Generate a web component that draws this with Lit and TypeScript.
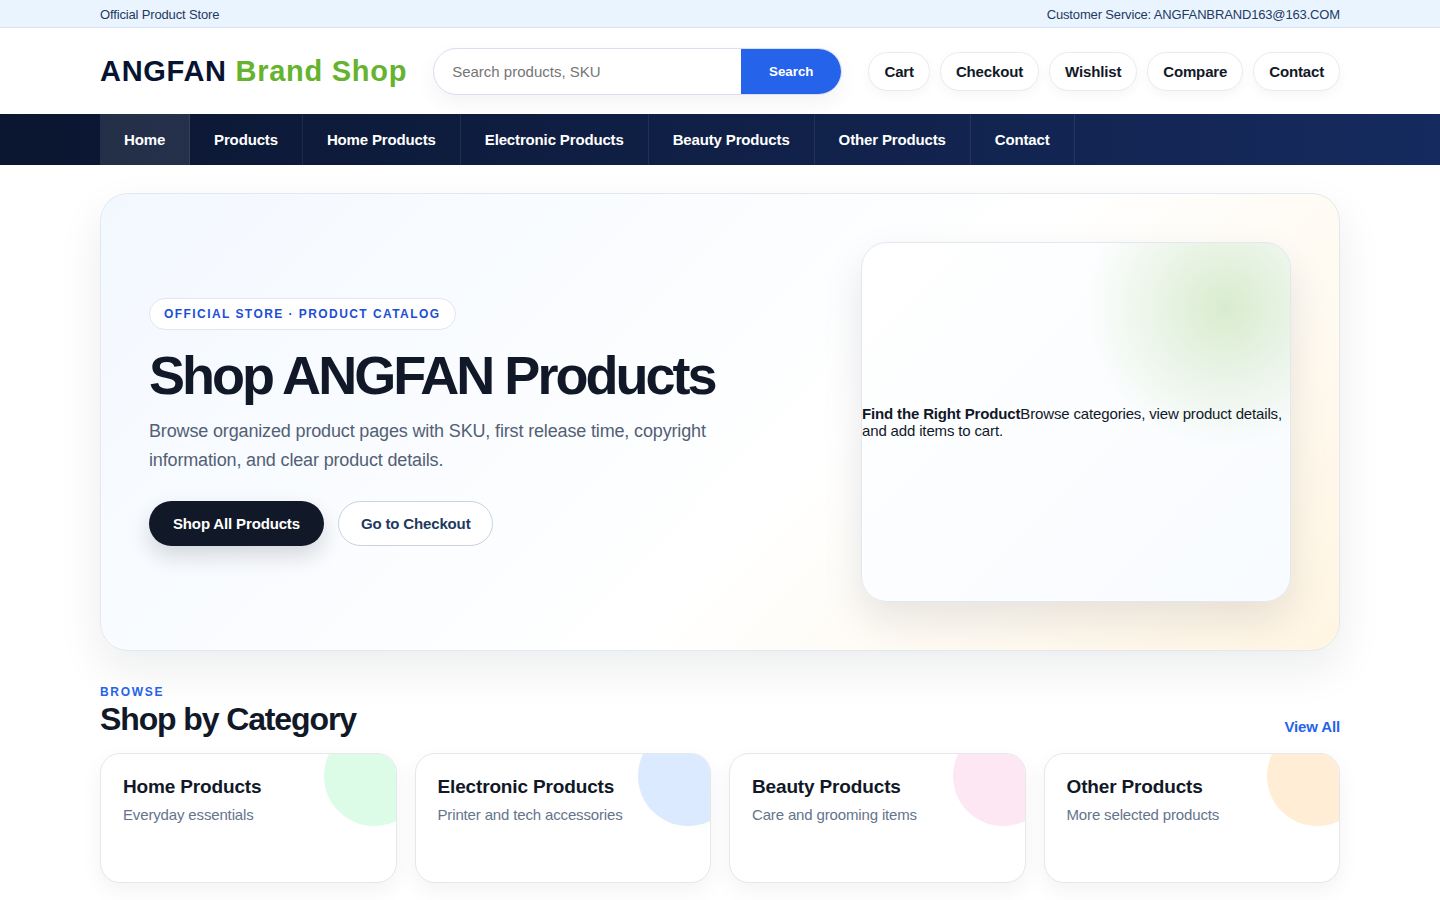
import { LitElement, html, css } from "lit";
import { customElement } from "lit/decorators.js";
import { classMap } from "lit/directives/class-map.js";

const ACTIONS = ["Cart", "Checkout", "Wishlist", "Compare", "Contact"];

const NAV = [
  "Home",
  "Products",
  "Home Products",
  "Electronic Products",
  "Beauty Products",
  "Other Products",
  "Contact",
];

const CATEGORIES = [
  { title: "Home Products", text: "Everyday essentials", tone: "green" },
  { title: "Electronic Products", text: "Printer and tech accessories", tone: "blue" },
  { title: "Beauty Products", text: "Care and grooming items", tone: "pink" },
  { title: "Other Products", text: "More selected products", tone: "orange" },
];

@customElement("app-root")
export class AppRoot extends LitElement {
  static styles = css`
    :host {
      display: block;
      min-height: 100vh;
      background: #fff;
      color: #111827;
      font-family: "Liberation Sans", Arial, sans-serif;
      font-size: 15px;
      letter-spacing: -0.01em;
    }
    * {
      box-sizing: border-box;
    }
    a {
      color: inherit;
      text-decoration: none;
    }
    h1,
    h2,
    h3,
    p {
      margin: 0;
    }
    .wrap {
      width: min(1240px, calc(100% - 40px));
      margin: 0 auto;
    }

    .topbar {
      background: #eaf4ff;
      border-bottom: 1px solid #d5e3f2;
      color: #1e3a5f;
      font-size: 13px;
      line-height: 15px;
      padding: 7px 0 5px;
    }
    .topbar-row {
      display: flex;
      justify-content: space-between;
    }

    .header {
      display: flex;
      align-items: center;
      gap: 26px;
      padding: 20px 0 19px;
    }
    .logo {
      font-size: 29px;
      font-weight: 700;
      letter-spacing: 0.025em;
      color: #061331;
      white-space: nowrap;
    }
    .logo-accent {
      color: #65b32e;
    }
    .search {
      flex: 1;
      display: flex;
      min-width: 0;
      height: 47px;
      border: 1px solid #d9def0;
      border-radius: 999px;
      overflow: hidden;
      background: #fff;
      box-shadow: 0 8px 22px rgba(15, 23, 42, 0.05);
    }
    .search-input {
      flex: 1;
      min-width: 0;
      border: 0;
      outline: 0;
      padding: 0 18px;
      background: transparent;
      font: inherit;
      color: inherit;
    }
    .search-button {
      border: 0;
      padding: 0 28px;
      background: #2563eb;
      color: #fff;
      font-family: inherit;
      font-weight: 700;
    }
    .actions {
      display: flex;
      gap: 10px;
    }
    .action {
      padding: 10px 15px;
      border: 1px solid #e9ebef;
      border-radius: 999px;
      background: #fff;
      font-weight: 700;
      line-height: 17px;
      box-shadow: 0 4px 12px rgba(15, 23, 42, 0.04);
    }

    .nav {
      background: linear-gradient(90deg, #0b1630, #152a5e);
      color: #fff;
    }
    .nav-row {
      display: flex;
    }
    .nav-link {
      padding: 17px 24px;
      border-right: 1px solid rgba(255, 255, 255, 0.08);
      font-weight: 700;
      line-height: 17px;
    }
    .nav-link.active {
      background: rgba(255, 255, 255, 0.1);
    }

    .hero {
      display: grid;
      grid-template-columns: minmax(0, 1fr) 430px;
      gap: 40px;
      align-items: center;
      margin-top: 28px;
      padding: 48px;
      border: 1px solid #e2e8f0;
      border-radius: 28px;
      background: linear-gradient(135deg, #f3f8ff 0%, #fff 58%, #fff5e2 100%);
      box-shadow: 0 18px 45px rgba(15, 23, 42, 0.08);
    }
    .badge {
      display: inline-block;
      padding: 8px 14px;
      border: 1px solid #dfe5f3;
      border-radius: 999px;
      background: #fff;
      color: #1d4ed8;
      font-size: 12px;
      font-weight: 700;
      line-height: 14px;
      letter-spacing: 0.12em;
      text-transform: uppercase;
    }
    .copy {
      display: flex;
      flex-direction: column;
      align-items: flex-start;
    }
    .hero-title {
      margin-top: 18px;
      font-size: 54px;
      line-height: 54px;
      letter-spacing: -0.055em;
    }
    .hero-text {
      max-width: 620px;
      margin-top: 15px;
      color: #526075;
      font-size: 18px;
      line-height: 29px;
    }
    .buttons {
      display: flex;
      gap: 14px;
      margin-top: 26px;
    }
    .button {
      border-radius: 999px;
      font-weight: 700;
      line-height: 17px;
    }
    .button-primary {
      padding: 14px 24px;
      background: #111827;
      color: #fff;
      box-shadow: 0 10px 22px rgba(17, 24, 39, 0.16);
    }
    .button-secondary {
      padding: 13px 22px;
      border: 1px solid #cbd1de;
      background: #fff;
      color: #1e3a5f;
    }
    .panel {
      display: flex;
      align-items: center;
      min-height: 360px;
      border: 1px solid #e2e8f0;
      border-radius: 26px;
      background:
        radial-gradient(circle at 85% 18%, rgba(101, 179, 46, 0.23), transparent 30%),
        linear-gradient(135deg, #fff, #f8fbff);
      line-height: 17px;
      box-shadow: 0 18px 40px rgba(15, 23, 42, 0.1);
    }

    .section {
      padding: 34px 0 28px;
    }
    .section-head {
      display: flex;
      align-items: flex-end;
      justify-content: space-between;
      margin-bottom: 18px;
    }
    .eyebrow {
      color: #2563eb;
      font-size: 12px;
      font-weight: 700;
      line-height: 14px;
      letter-spacing: 0.14em;
      text-transform: uppercase;
    }
    .section-title {
      margin-top: 4px;
      font-size: 32px;
      line-height: 32px;
      letter-spacing: -0.035em;
    }
    .view-all {
      color: #2563eb;
      font-weight: 700;
      line-height: 17px;
    }
    .cards {
      display: grid;
      grid-template-columns: repeat(4, minmax(0, 1fr));
      gap: 18px;
    }
    .card {
      position: relative;
      overflow: hidden;
      min-height: 130px;
      padding: 22px;
      border: 1px solid #e5e7eb;
      border-radius: 20px;
      background: #fff;
      box-shadow: 0 8px 22px rgba(15, 23, 42, 0.05);
    }
    .card::after {
      content: "";
      position: absolute;
      top: -28px;
      right: -28px;
      width: 100px;
      height: 100px;
      border-radius: 50%;
      background: var(--tone);
    }
    .green {
      --tone: #dcfce7;
    }
    .blue {
      --tone: #dbeafe;
    }
    .pink {
      --tone: #fce7f3;
    }
    .orange {
      --tone: #ffedd5;
    }
    .card-title {
      font-size: 19px;
      line-height: 22px;
    }
    .card-text {
      margin-top: 8px;
      color: #64748b;
      line-height: 17px;
    }
  `;

  render() {
    return html`
      <div class="topbar">
        <div class="wrap topbar-row">
          <span>Official Product Store</span>
          <span>Customer Service: ANGFANBRAND163@163.COM</span>
        </div>
      </div>

      <header class="wrap header">
        <a class="logo" href="#">ANGFAN <span class="logo-accent">Brand Shop</span></a>
        <form class="search" role="search" @submit=${(e: Event) => e.preventDefault()}>
          <input
            class="search-input"
            type="text"
            aria-label="Search products, SKU"
            placeholder="Search products, SKU"
          />
          <button class="search-button" type="submit">Search</button>
        </form>
        <div class="actions">
          ${ACTIONS.map((label) => html`<a class="action" href="#">${label}</a>`)}
        </div>
      </header>

      <nav class="nav">
        <div class="wrap nav-row">
          ${NAV.map(
            (label, i) =>
              html`<a class=${classMap({ "nav-link": true, active: i === 0 })} href="#">${label}</a>`
          )}
        </div>
      </nav>

      <main class="wrap">
        <section class="hero">
          <div class="copy">
            <span class="badge">Official Store · Product Catalog</span>
            <h1 class="hero-title">Shop ANGFAN Products</h1>
            <p class="hero-text">
              Browse organized product pages with SKU, first release time, copyright information,
              and clear product details.
            </p>
            <div class="buttons">
              <a class="button button-primary" href="#">Shop All Products</a>
              <a class="button button-secondary" href="#">Go to Checkout</a>
            </div>
          </div>
          <div class="panel">
            <p><strong>Find the Right Product</strong>Browse categories, view product details, and
              add items to cart.</p>
          </div>
        </section>

        <section class="section">
          <div class="section-head">
            <div>
              <div class="eyebrow">Browse</div>
              <h2 class="section-title">Shop by Category</h2>
            </div>
            <a class="view-all" href="#">View All</a>
          </div>
          <div class="cards">
            ${CATEGORIES.map(
              (c) => html`
                <a class=${classMap({ card: true, [c.tone]: true })} href="#">
                  <h3 class="card-title">${c.title}</h3>
                  <p class="card-text">${c.text}</p>
                </a>
              `
            )}
          </div>
        </section>
      </main>
    `;
  }
}
